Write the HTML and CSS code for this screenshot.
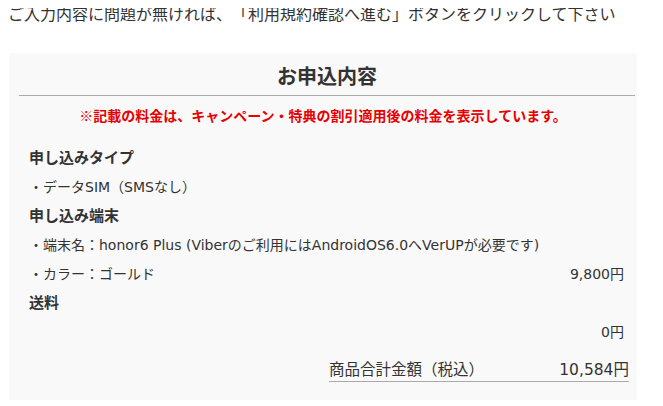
FILE: index.html
```html
<!DOCTYPE html>
<html lang="ja">
<head>
    <meta charset="UTF-8">
    <title>お申込内容の確認</title>
    <link rel="stylesheet" href="styles.css">
</head>
<body>

<p class="lead">ご入力内容に問題が無ければ、「利用規約確認へ進む」ボタンをクリックして下さい</p>

<div class="order_box">
    <h2 class="order_title">お申込内容</h2>
    <p class="order_note">※記載の料金は、キャンペーン・特典の割引適用後の料金を表示しています。</p>

    <div class="order_list">
        <div class="row head">申し込みタイプ</div>
        <div class="row">・データSIM（SMSなし）</div>

        <div class="row head">申し込み端末</div>
        <div class="row">・端末名：honor6 Plus (Viberのご利用にはAndroidOS6.0へVerUPが必要です)</div>
        <div class="row">
            <span>・カラー：ゴールド</span>
            <span class="price">9,800円</span>
        </div>

        <div class="row head">送料</div>
        <div class="row">
            <span></span>
            <span class="price">0円</span>
        </div>
    </div>

    <div class="total">
        <span>商品合計金額（税込）</span>
        <span>10,584円</span>
    </div>
</div>

</body>
</html>
```

FILE: styles.css
```css
body {
    margin: 8px;
    color: #333;
    font-family: "DejaVu Sans", "Noto Sans CJK JP", sans-serif;
    background-color: white;
    text-spacing-trim: space-all;
}

.lead {
    margin: -9px 0 0 0;
    font-size: 16px;
    line-height: 28px;
    font-family: "Noto Sans CJK JP", sans-serif;
}

.order_box {
    margin: 26px 18px 0 1px;
    padding: 8px 0 18px 0;
    background-color: #f9f9f9;
}

.order_title {
    margin: 0 2px 0 10px;
    padding-bottom: 4px;
    border-bottom: 1px solid #aaa;
    font-size: 20px;
    line-height: 30px;
    text-align: center;
    font-family: "Noto Sans CJK JP", sans-serif;
}

.order_note {
    margin: 9px 0 0 0;
    color: #e60000;
    font-size: 14px;
    font-weight: bold;
    line-height: 20px;
    text-align: center;
    font-family: "Noto Sans CJK JP", sans-serif;
}

.order_list {
    margin-top: 17px;
    padding: 0 13px 0 20px;
}

.row {
    display: flex;
    justify-content: space-between;
    font-size: 14px;
    line-height: 25px;
    padding-top: 4px;
}

.row.head {
    font-size: 15px;
    font-weight: bold;
    line-height: 29px;
    padding-top: 0;
    font-family: "Noto Sans CJK JP", sans-serif;
}

.total {
    display: flex;
    justify-content: space-between;
    width: 300px;
    margin: 14px 8px 0 auto;
    border-bottom: 1px solid #aaa;
    font-size: 15.5px;
    line-height: 22px;
}
```
